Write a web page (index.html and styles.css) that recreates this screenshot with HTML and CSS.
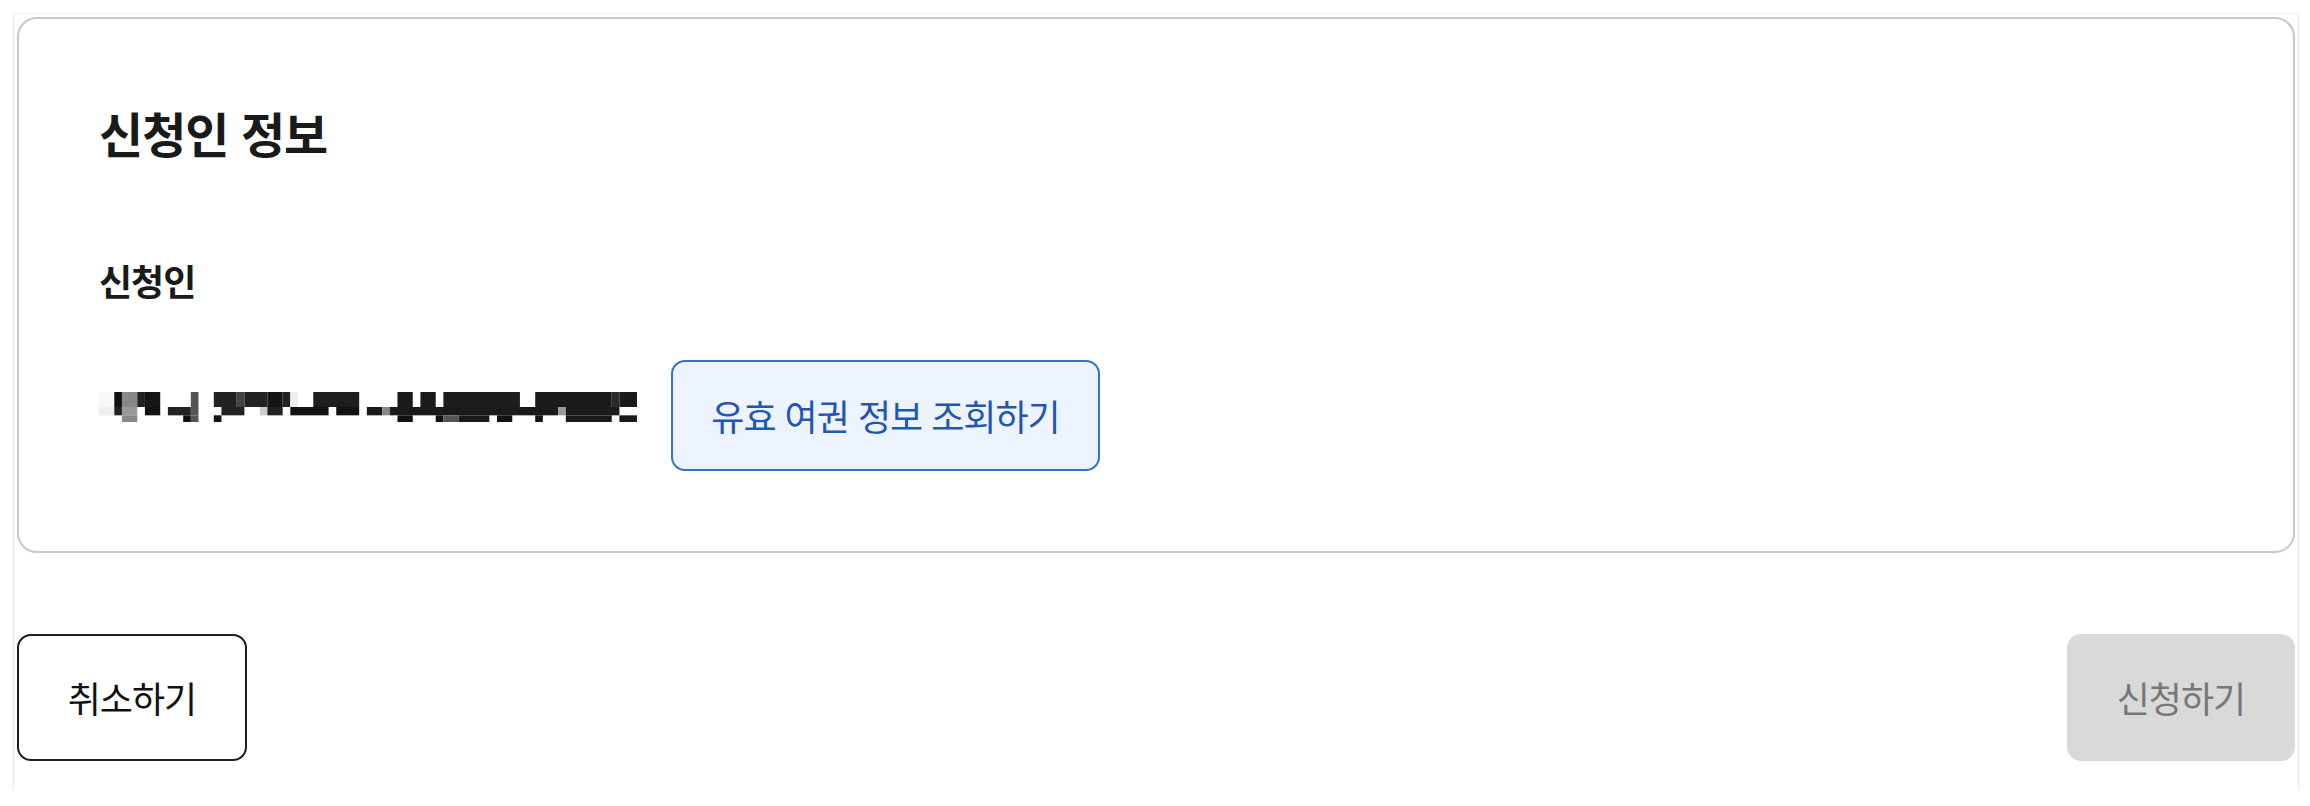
FILE: index.html
```html
<!DOCTYPE html>
<html lang="ko">
<head>
<meta charset="utf-8">
<title>신청인 정보</title>
<link rel="stylesheet" href="styles.css">
</head>
<body>
<div class="sheet">
  <section class="card">
    <h2 class="card-title">신청인 정보</h2>
    <h3 class="field-label">신청인</h3>
    <div class="field-row">
      <svg class="masked" viewBox="52 152 1406 90" preserveAspectRatio="none" aria-label="가려진 신청인 정보">
        <g>
          <rect x="52" y="152" width="40" height="45" fill="#f8f8f8"/>
          <rect x="92" y="152" width="20" height="45" fill="#111"/>
          <rect x="112" y="152" width="40" height="45" fill="#888"/>
          <rect x="152" y="152" width="20" height="45" fill="#222"/>
          <rect x="172" y="152" width="40" height="45" fill="#161616"/>
          <rect x="292" y="152" width="20" height="45" fill="#555"/>
          <rect x="352" y="152" width="60" height="45" fill="#222"/>
          <rect x="412" y="152" width="20" height="45" fill="#444"/>
          <rect x="432" y="152" width="60" height="45" fill="#222"/>
          <rect x="492" y="152" width="40" height="45" fill="#151515"/>
          <rect x="532" y="152" width="20" height="45" fill="#222"/>
          <rect x="552" y="152" width="20" height="45" fill="#eee"/>
          <rect x="612" y="152" width="120" height="45" fill="#1e1e1e"/>
          <rect x="832" y="152" width="40" height="45" fill="#1a1a1a"/>
          <rect x="892" y="152" width="40" height="45" fill="#1a1a1a"/>
          <rect x="952" y="152" width="200" height="45" fill="#1c1c1c"/>
          <rect x="1192" y="152" width="200" height="45" fill="#1a1a1a"/>
          <rect x="1392" y="152" width="20" height="45" fill="#2a2a2a"/>
          <rect x="1412" y="152" width="46" height="45" fill="#1a1a1a"/>
        </g>
        <g>
          <rect x="52" y="197" width="40" height="25" fill="#eee"/>
          <rect x="92" y="197" width="20" height="25" fill="#222"/>
          <rect x="112" y="197" width="40" height="25" fill="#999"/>
          <rect x="172" y="197" width="40" height="25" fill="#111"/>
          <rect x="232" y="197" width="60" height="25" fill="#222"/>
          <rect x="292" y="197" width="20" height="25" fill="#555"/>
          <rect x="372" y="197" width="60" height="25" fill="#222"/>
          <rect x="472" y="197" width="20" height="25" fill="#ccc"/>
          <rect x="492" y="197" width="40" height="25" fill="#222"/>
          <rect x="552" y="197" width="100" height="25" fill="#111"/>
          <rect x="672" y="197" width="60" height="25" fill="#111"/>
          <rect x="752" y="197" width="40" height="25" fill="#1a1a1a"/>
          <rect x="792" y="197" width="20" height="25" fill="#888"/>
          <rect x="812" y="197" width="440" height="25" fill="#1a1a1a"/>
          <rect x="1252" y="197" width="20" height="25" fill="#999"/>
          <rect x="1272" y="197" width="140" height="25" fill="#1a1a1a"/>
        </g>
        <g>
          <rect x="112" y="222" width="40" height="20" fill="#888"/>
          <rect x="272" y="222" width="20" height="20" fill="#111"/>
          <rect x="292" y="222" width="20" height="20" fill="#555"/>
          <rect x="352" y="222" width="20" height="20" fill="#111"/>
          <rect x="832" y="222" width="40" height="20" fill="#111"/>
          <rect x="932" y="222" width="20" height="20" fill="#111"/>
          <rect x="952" y="222" width="40" height="20" fill="#555"/>
          <rect x="992" y="222" width="80" height="20" fill="#1a1a1a"/>
          <rect x="1092" y="222" width="40" height="20" fill="#111"/>
          <rect x="1192" y="222" width="20" height="20" fill="#111"/>
          <rect x="1272" y="222" width="120" height="20" fill="#1a1a1a"/>
          <rect x="1412" y="222" width="46" height="20" fill="#1a1a1a"/>
        </g>
      </svg>
      <button class="btn-lookup" type="button">유효 여권 정보 조회하기</button>
    </div>
  </section>
  <div class="actions">
    <button class="btn-cancel" type="button">취소하기</button>
    <button class="btn-submit" type="button" disabled>신청하기</button>
  </div>
</div>
</body>
</html>
```

FILE: styles.css
```css
html, body {
  margin: 0;
  padding: 0;
  background: #ffffff;
}

body {
  font-family: "Noto Sans CJK KR", "Noto Sans", sans-serif;
  color: #1a1a1a;
}

.sheet {
  margin: 14px 0 0 14px;
  width: 2284px;
  box-sizing: border-box;
  padding: 3px 3px 29px 3px;
  background: #ffffff;
  box-shadow: 0 1px 3px rgba(0, 0, 0, 0.16), 0 0 0 1px rgba(0, 0, 0, 0.03);
  display: flex;
  flex-direction: column;
  gap: 81px;
}

.card {
  border: 2px solid #c8c8c8;
  border-radius: 20px;
  padding: 85px 80px 80px 80px;
  display: flex;
  flex-direction: column;
}

.card-title {
  margin: 0;
  font-size: 48px;
  line-height: 1.2;
  font-weight: 700;
  letter-spacing: -1px;
  color: #1a1a1a;
}

.field-label {
  margin: 97px 0 0 0;
  font-size: 36px;
  line-height: 1.2;
  font-weight: 700;
  letter-spacing: -1px;
  color: #1a1a1a;
}

.field-row {
  margin-top: 58px;
  display: flex;
  align-items: flex-start;
  gap: 34px;
}

.masked {
  display: block;
  width: 538px;
  height: 30px;
  margin-top: 32px;
  flex: none;
}

.btn-lookup {
  font-family: "Noto Sans CJK KR", "Noto Sans", sans-serif;
  font-size: 36px;
  line-height: 1.2;
  letter-spacing: -1px;
  font-weight: 400;
  color: #1f57b3;
  background: #eef4ff;
  border: 2px solid #3571cb;
  border-radius: 14px;
  padding: 0;
  width: 429px;
  height: 111px;
  box-sizing: border-box;
  text-align: center;
  cursor: pointer;
}

.actions {
  display: flex;
  justify-content: space-between;
  align-items: center;
}

.btn-cancel,
.btn-submit {
  font-family: "Noto Sans CJK KR", "Noto Sans", sans-serif;
  font-size: 36px;
  line-height: 1.2;
  letter-spacing: -1px;
  font-weight: 400;
  height: 127px;
  padding: 0;
  box-sizing: border-box;
  border-radius: 14px;
  text-align: center;
}

.btn-cancel {
  width: 230px;
  background: #ffffff;
  color: #111111;
  border: 2px solid #1e1e1e;
  cursor: pointer;
}

.btn-submit {
  width: 228px;
  background: #d9d9d9;
  color: #777777;
  border: none;
}
```
